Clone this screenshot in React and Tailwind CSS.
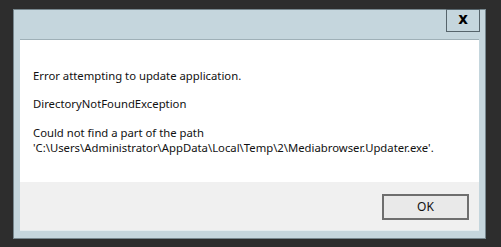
export default function App() {
  const font = { fontFamily: '"Noto Sans", "Open Sans", sans-serif' };
  return (
    <div className="w-[501px] h-[247px] bg-[#2d2d2d] pl-[13px] pt-[9px] overflow-hidden" style={font}>
      <div className="w-[473px] h-[230px] bg-[#c5d6dd] border border-[#77878e] flex flex-col relative">
        <div className="h-[29px] shrink-0" />
        <button className="absolute right-[5px] top-[-1px] w-[34px] h-[23px] border border-[#56646b] bg-[#c5d6dd] flex items-center justify-center">
          <span className="text-[15px] font-bold leading-none text-black mt-[-2px]" style={{ fontFamily: '"DejaVu Sans", sans-serif' }}>x</span>
        </button>
        <div className="mx-[6px] w-[459px] h-[192px] flex flex-col border-t border-[#9fb0b7] border-b border-b-[#e4ecef]">
          <div className="h-[142px] bg-white pl-[13px] pt-[28px] text-[11.3px] leading-[15px] text-[#111]">
            <p>Error attempting to update application.</p>
            <p className="mt-[13px]">DirectoryNotFoundException</p>
            <p className="mt-[14px]">Could not find a part of the path</p>
            <p>'C:\Users\Administrator\AppData\Local\Temp\2\Mediabrowser.Updater.exe'.</p>
          </div>
          <div className="flex-1 bg-[#f0f0f0] flex justify-end items-start pt-[12px] pr-[10px]">
            <button className="w-[87px] h-[26px] border-2 border-[#6e6e6e] bg-[#e9e9e9] text-[12px] text-[#111] flex items-center justify-center">
              OK
            </button>
          </div>
        </div>
      </div>
    </div>
  );
}
